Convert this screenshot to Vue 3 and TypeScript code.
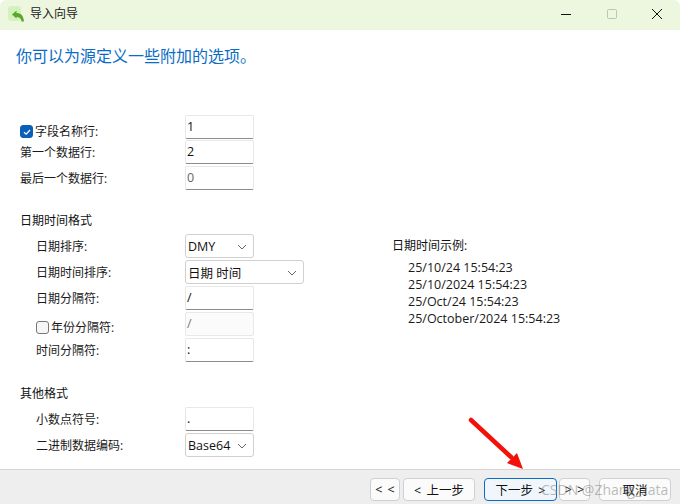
<script setup lang="ts">
const examples: string[] = [
  '25/10/24 15:54:23',
  '25/10/2024 15:54:23',
  '25/Oct/24 15:54:23',
  '25/October/2024 15:54:23'
]
</script>

<template>
  <div class="win">
    <header class="titlebar">
      <svg class="app-icon" width="18" height="18" viewBox="0 0 18 18">
        <rect x="0" y="0" width="13" height="15" rx="3" fill="#d5f2bd" />
        <path d="M4 8.5 L8.5 4.5 V7 C12.5 7 15.5 9 16 15.5 L13.5 15.5 C13.2 12.5 11.5 11 8.5 11 V12.5 Z" fill="#5aa832" />
      </svg>
      <span class="title">导入向导</span>
      <div class="controls">
        <svg width="12" height="12" viewBox="0 0 12 12"><path d="M1 6.5 H11" stroke="#111" stroke-width="1" /></svg>
        <svg width="12" height="12" viewBox="0 0 12 12"><rect x="1.5" y="1.5" width="9" height="9" rx="1" fill="none" stroke="#bcc4b4" /></svg>
        <svg width="12" height="12" viewBox="0 0 12 12"><path d="M1 1 L11 11 M11 1 L1 11" stroke="#111" stroke-width="1" /></svg>
      </div>
    </header>

    <main class="body">
      <h1 class="heading">你可以为源定义一些附加的选项。</h1>

      <section class="rows first">
        <div class="row">
          <label class="lbl check-lbl drop-lg">
            <span class="check on">
              <svg width="10" height="10" viewBox="0 0 10 10"><path d="M2 5.2 L4.2 7.2 L8 3" fill="none" stroke="#fff" stroke-width="1.2" /></svg>
            </span>字段名称行:
          </label>
          <div class="input">1</div>
        </div>
        <div class="row">
          <label class="lbl">第一个数据行:</label>
          <div class="input">2</div>
        </div>
        <div class="row gap2">
          <label class="lbl drop-sm">最后一个数据行:</label>
          <div class="input muted">0</div>
        </div>
      </section>

      <div class="group-title date-title">日期时间格式</div>
      <section class="date-wrap">
        <div class="rows">
          <div class="row">
            <label class="lbl sub">日期排序:</label>
            <div class="select">DMY<svg class="chev" width="10" height="6" viewBox="0 0 10 6"><path d="M1 1 L5 5 L9 1" fill="none" stroke="#666" /></svg></div>
          </div>
          <div class="row gap2">
            <label class="lbl sub">日期时间排序:</label>
            <div class="select wide">日期 时间<svg class="chev" width="10" height="6" viewBox="0 0 10 6"><path d="M1 1 L5 5 L9 1" fill="none" stroke="#666" /></svg></div>
          </div>
          <div class="row gap2">
            <label class="lbl sub">日期分隔符:</label>
            <div class="input">/</div>
          </div>
          <div class="row gap2">
            <label class="lbl sub check-lbl drop-md">
              <span class="check"></span>年份分隔符:
            </label>
            <div class="input disabled">/</div>
          </div>
          <div class="row gap2">
            <label class="lbl sub">时间分隔符:</label>
            <div class="input">:</div>
          </div>
        </div>
        <div class="examples">
          <div class="ex-title">日期时间示例:</div>
          <div v-for="e in examples" :key="e" class="ex">{{ e }}</div>
        </div>
      </section>

      <div class="group-title other-title">其他格式</div>
      <section class="rows other-rows">
        <div class="row">
          <label class="lbl sub">小数点符号:</label>
          <div class="input">.</div>
        </div>
        <div class="row gap2">
          <label class="lbl sub">二进制数据编码:</label>
          <div class="select">Base64<svg class="chev" width="10" height="6" viewBox="0 0 10 6"><path d="M1 1 L5 5 L9 1" fill="none" stroke="#666" /></svg></div>
        </div>
      </section>
    </main>

    <footer class="footer">
      <button class="btn b-first">&lt; &lt;</button>
      <button class="btn b-prev">&lt; 上一步</button>
      <button class="btn b-next primary">下一步 &gt;</button>
      <button class="btn b-last">&gt; &gt;</button>
      <button class="btn b-cancel">取消</button>
    </footer>

    <svg class="arrow" width="64" height="60" viewBox="0 0 64 60">
      <path d="M3 3 L43 40" stroke="#f5100a" stroke-width="4.5" stroke-linecap="round" />
      <path d="M55 52 L39 46 L49 36 Z" fill="#f5100a" />
    </svg>
    <span class="watermark">CSDN @Zhang_zata</span>
  </div>
</template>

<style scoped>
.win {
  position: relative;
  width: 680px;
  height: 504px;
  overflow: hidden;
  display: flex;
  flex-direction: column;
  background: #fff;
  color: #111;
  font-family: "Open Sans", "Noto Sans CJK SC", sans-serif;
  font-size: 12px;
}

.titlebar {
  height: 30px;
  flex: none;
  display: flex;
  align-items: flex-start;
  background: #edf7e0;
  border-radius: 6px 6px 0 0;
  padding-left: 8px;
}

.app-icon {
  margin-top: 6px;
}

.title {
  margin: 6px 0 0 4px;
  line-height: 16px;
  color: #222;
}

.controls {
  margin-left: auto;
  margin-top: 8px;
  display: flex;
  gap: 33.5px;
  padding-right: 17px;
}

.body {
  flex: 1;
  min-height: 0;
  padding: 0 0 0 20px;
}

.heading {
  margin: 14px 0 0 -4px;
  font-size: 16px;
  line-height: 24px;
  font-weight: 400;
  color: #0a6cc4;
}

.rows {
  display: flex;
  flex-direction: column;
  width: 285px;
}

.first {
  margin-top: 46px;
}

.row {
  display: flex;
  align-items: center;
  height: 24px;
  margin-top: 1px;
}

.gap2 {
  margin-top: 2px;
}

.lbl {
  width: 165px;
  flex: none;
  display: flex;
  align-items: center;
  margin-top: 2px;
  line-height: 16px;
  color: #1a1a1a;
}

.drop-lg {
  margin-top: 9px;
}

.drop-md {
  margin-top: 7px;
}

.drop-sm {
  margin-top: 1px;
}

.sub {
  padding-left: 16px;
  box-sizing: border-box;
}

.check-lbl {
  gap: 2px;
}

.check {
  width: 13px;
  height: 13px;
  box-sizing: border-box;
  border: 1px solid #777;
  border-radius: 3px;
  background: #f6f6f6;
  display: flex;
  align-items: center;
  justify-content: center;
}

.check.on {
  border-color: #0a5fb8;
  background: #0a5fb8;
}

.input,
.select {
  box-sizing: border-box;
  width: 69px;
  height: 24px;
  display: flex;
  align-items: center;
  border: 1px solid #e8e8e8;
  border-radius: 2px;
  background: #fff;
  font-size: 12.5px;
}

.input {
  padding: 0 0 1px 1px;
  border-bottom: 1px solid #8c8c8c;
}

.muted {
  color: #666;
}

.disabled {
  color: #777;
  background: #fbfbfb;
  border-bottom-color: #e8e8e8;
}

.select {
  position: relative;
  padding-left: 2px;
  border-color: #d0d0d0;
  border-radius: 3px;
}

.wide {
  width: 119px;
}

.chev {
  position: absolute;
  right: 6px;
  top: 9px;
}

.group-title {
  line-height: 16px;
}

.date-title {
  margin-top: 23px;
}

.other-title {
  margin-top: 24px;
}

.date-wrap {
  display: flex;
  margin-top: 4px;
}

.other-rows {
  margin-top: 4px;
}

.examples {
  margin-left: 87px;
  padding-top: 5px;
}

.ex-title {
  line-height: 16px;
  margin-bottom: 5px;
}

.ex {
  line-height: 17px;
  margin-left: 16px;
  font-size: 12.5px;
  color: #1a1a1a;
}

.footer {
  position: relative;
  height: 35px;
  flex: none;
  box-sizing: border-box;
  background: #eeeeee;
  border-top: 1px solid #d4d4d4;
  display: flex;
  align-items: flex-start;
  padding: 8px 0 0 370px;
}

.btn {
  box-sizing: border-box;
  height: 23px;
  padding: 0;
  border: 1px solid #d0d0d0;
  border-radius: 4px;
  background: #fbfbfb;
  color: #111;
  font-family: inherit;
  font-size: 12.5px;
  word-spacing: 2px;
}

.b-first { width: 30px; }
.b-prev { width: 72px; margin-left: 3px; }
.b-next { width: 73px; margin-left: 9px; }
.b-last { width: 31px; margin-left: 2px; }
.b-cancel { width: 72px; margin-left: 9px; }

.primary {
  border-color: #0a6cc4;
  background: #f0f6fc;
}

.arrow {
  position: absolute;
  left: 468px;
  top: 417px;
}

.watermark {
  position: absolute;
  left: 541px;
  top: 480px;
  font-size: 14px;
  color: rgba(130, 130, 130, 0.55);
}
</style>
